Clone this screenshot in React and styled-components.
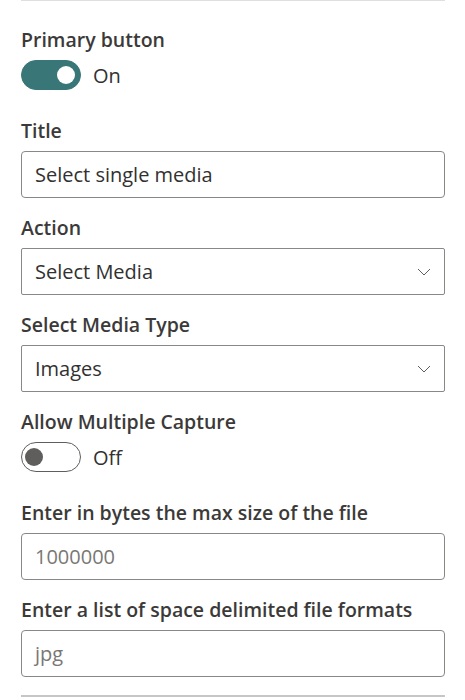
import styled, { createGlobalStyle } from 'styled-components'

const GlobalStyle = createGlobalStyle`
    body {
        margin: 0;
        background: #ffffff;
        font-family: "Open Sans", "Noto Sans", sans-serif;
        color: #323130;
    }
`

const Chevron = () => (
    <svg width='14' height='8' viewBox='0 0 14 8' fill='none'>
        <path d='M1 1 L7 7 L13 1' stroke='#605e5c' strokeWidth='1' />
    </svg>
)

const Toggle = ({ on }) => (
    <ToggleRow>
        <Track $on={on}>
            <Knob $on={on} />
        </Track>
        <ToggleText>{on ? 'On' : 'Off'}</ToggleText>
    </ToggleRow>
)

const Dropdown = ({ value }) => (
    <SelectBox>
        <span>{value}</span>
        <Chevron />
    </SelectBox>
)

const App = () => {
    return (
        <>
            <GlobalStyle />
            <Pane>
                <Divider />
                <Field $top={26}>
                    <Label>Primary button</Label>
                    <Toggle on />
                </Field>
                <Field $top={28}>
                    <Label>Title</Label>
                    <TextBox>Select single media</TextBox>
                </Field>
                <Field $top={17}>
                    <Label>Action</Label>
                    <Dropdown value='Select Media' />
                </Field>
                <Field $top={17}>
                    <Label>Select Media Type</Label>
                    <Dropdown value='Images' />
                </Field>
                <Field $top={17}>
                    <Label>Allow Multiple Capture</Label>
                    <Toggle />
                </Field>
                <Field $top={28}>
                    <Label>Enter in bytes the max size of the file</Label>
                    <TextBox $placeholder>1000000</TextBox>
                </Field>
                <Field $top={17}>
                    <Label>Enter a list of space delimited file formats</Label>
                    <TextBox $placeholder>jpg</TextBox>
                </Field>
                <NextBox />
            </Pane>
        </>
    )
}

const Pane = styled.div`
    width: 424px;
    padding: 0 20px 0 21px;
    height: 700px;
    overflow: hidden;
`

const Divider = styled.div`
    height: 1px;
    background-color: #e1dfdd;
`

const Field = styled.div`
    display: flex;
    flex-direction: column;
    margin-top: ${p => p.$top}px;
`

const Label = styled.div`
    font-size: 19.5px;
    font-weight: 600;
    line-height: 25px;
    color: #3b3a39;
    margin-bottom: 8px;
`

const ToggleRow = styled.div`
    display: flex;
    align-items: center;
    gap: 12px;
`

const Track = styled.div`
    box-sizing: border-box;
    width: 60px;
    height: 30px;
    border-radius: 15px;
    border: 1px solid ${p => (p.$on ? '#397677' : '#605e5c')};
    background-color: ${p => (p.$on ? '#397677' : '#ffffff')};
    display: flex;
    align-items: center;
    justify-content: ${p => (p.$on ? 'flex-end' : 'flex-start')};
    padding: 0 5px 0 3px;
`

const Knob = styled.div`
    width: 18px;
    height: 18px;
    border-radius: 50%;
    background-color: ${p => (p.$on ? '#ffffff' : '#605e5c')};
`

const ToggleText = styled.span`
    font-size: 20px;
    color: #323130;
`

const TextBox = styled.div`
    box-sizing: border-box;
    height: 47px;
    border: 1px solid #8a8886;
    border-radius: 4px;
    padding: 0 13px;
    display: flex;
    align-items: center;
    font-size: 20px;
    color: ${p => (p.$placeholder ? '#797775' : '#323130')};
`

const SelectBox = styled.div`
    box-sizing: border-box;
    height: 47px;
    border: 1px solid #8a8886;
    border-radius: 2px;
    padding: 0 13px 0 13px;
    display: flex;
    align-items: center;
    justify-content: space-between;
    font-size: 20px;
    color: #323130;
`

const NextBox = styled.div`
    margin-top: 18px;
    height: 40px;
    border-top: 2px solid #c8c6c4;
`

export default App
